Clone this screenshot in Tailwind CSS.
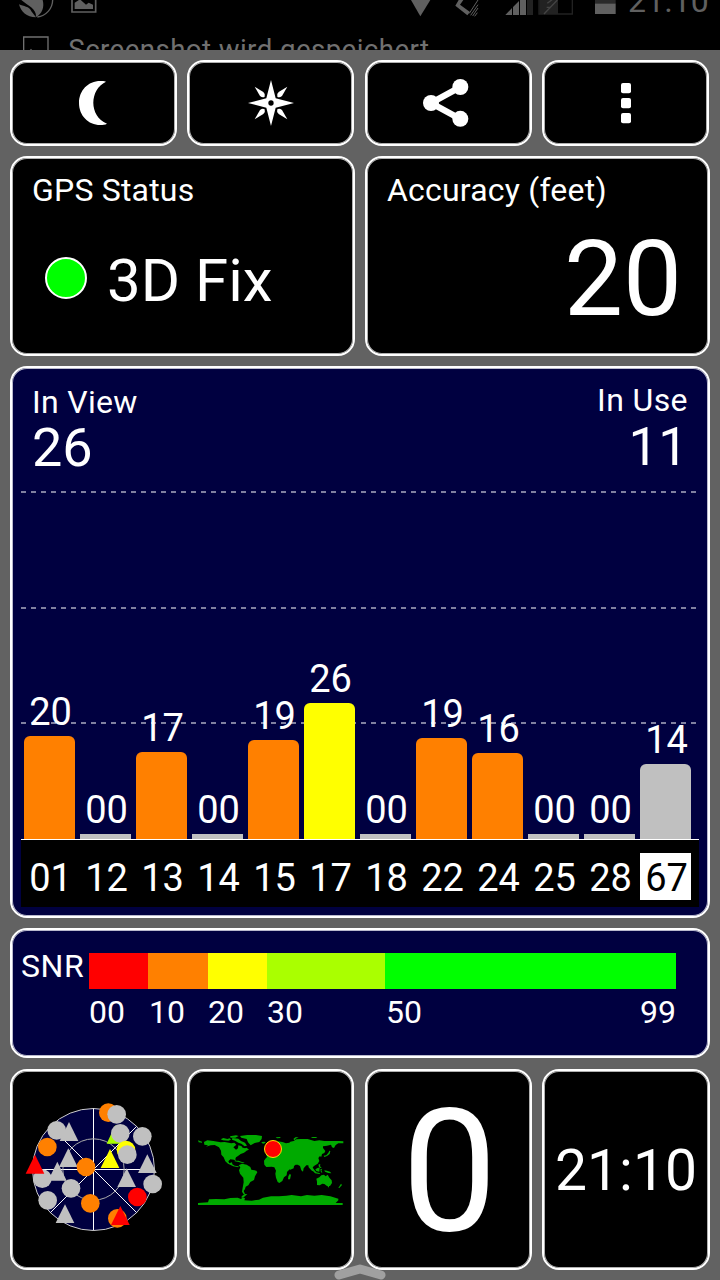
<!DOCTYPE html>
<html lang="de">
<head>
<meta charset="utf-8">
<title>GPS Test</title>
<script src="https://cdn.jsdelivr.net/npm/@tailwindcss/browser@4"></script>
</head>
<body class="bg-[#626262] text-white font-['Roboto',sans-serif]">
<div class="relative w-[720px] h-[1280px] overflow-hidden flex flex-col">
  <!-- status bar with the rolling notification ticker -->
  <header class="h-[50px] shrink-0 bg-black overflow-hidden">
    <svg class="block" width="720" height="50" viewBox="0 0 2160 150" fill="#606060">
      <path d="M57 13 C70 20 88 18 94 34 L108 52 C80 52 62 34 57 13Z M64 0 H128 C134 22 126 42 108 51 C110 26 84 18 64 0Z"/>
      <path d="M158 0 A52 52 0 0 1 112 51" fill="none" stroke="#606060" stroke-width="4"/>
      <path d="M216 -10 V36 H287 V-10" fill="none" stroke="#606060" stroke-width="5"/>
      <path d="M224 27 V8 L240 -2 L258 14 L266 8 L279 14 V27Z"/>
      <path d="M71 160 V111 H144 V160" fill="none" stroke="#707070" stroke-width="4"/>
      <path d="M86 154 L93 146 L100 154Z"/>
      <text x="205" y="177" font-size="83" fill="#707070" textLength="1082">Screenshot wird gespeichert</text>
      <path d="M1233 0 H1291 L1261 49Z"/>
      <path d="M1376 0 L1366 17 L1402 46 L1410 36 L1380 14 L1390 0Z"/>
      <path d="M1408 40 L1434 0 M1412 46 L1434 14 M1418 48 L1434 24 M1424 49 L1432 38" stroke="#606060" stroke-width="3" fill="none"/>
      <path d="M1516 45 L1536 24 V45Z M1539 45 V21 L1557 3 V45Z M1560 45 V0 H1578 V45Z"/>
      <path d="M1581 0 H1599 V45 H1581Z" fill="#222"/>
      <path d="M1617 -4 V42 H1717 V-4" fill="none" stroke="#222" stroke-width="4"/>
      <path d="M1618 0 H1674 V42 H1618Z" fill="#222"/>
      <path d="M1632 42 L1672 0 M1640 22 H1650 M1642 10 L1660 -4" fill="none" stroke="#444" stroke-width="4"/>
      <path d="M1785 0 H1847 V12 H1785Z" fill="#2a2a2a"/>
      <path d="M1785 11 H1847 V42 H1785Z"/>
      <text x="1884" y="37" font-size="96" textLength="242">21:10</text>
    </svg>
  </header>

  <main class="flex flex-col gap-[10px] pl-[10px] pt-[10px]">
    <!-- toolbar -->
    <div class="grid grid-cols-[177px_178px_177px_167px] h-[86px]">
      <button class="w-[167px] h-full bg-black rounded-[17px] border-2 border-white inset-ring inset-ring-[#b0b0b0] flex items-center justify-center">
        <svg width="163" height="82" viewBox="36 186 489 246" fill="#fff"><path d="M318 245 C312 243 306 243 301 243 C264 243 237 272 237 309 C237 346 264 375 301 375 C309 375 315 374 321 371 C266 348 268 268 318 245Z"/></svg>
      </button>
      <button class="w-[167px] h-full bg-black rounded-[17px] border-2 border-white inset-ring inset-ring-[#b0b0b0] flex items-center justify-center">
        <svg width="163" height="82" viewBox="567 186 489 246" fill="#fff">
          <path d="M813 240 L827 295 L882 309 L827 323 L813 378 L799 323 L744 309 L799 295Z"/>
          <path d="M764 260 L790 276 Q797 282 794 290 Q788 294 780 288Z"/>
          <path d="M862 260 L836 276 Q829 282 832 290 Q838 294 846 288Z"/>
          <path d="M764 358 L790 342 Q797 336 794 328 Q788 324 780 330Z"/>
          <path d="M862 358 L836 342 Q829 336 832 328 Q838 324 846 330Z"/>
          <circle cx="813" cy="309" r="8" fill="#000"/>
        </svg>
      </button>
      <button class="w-[167px] h-full bg-black rounded-[17px] border-2 border-white inset-ring inset-ring-[#b0b0b0] flex items-center justify-center">
        <svg width="163" height="82" viewBox="21 186 489 246" fill="#fff"><circle cx="213" cy="309" r="24"/><circle cx="301" cy="261" r="24"/><circle cx="301" cy="356.500" r="24"/><path d="M301 261 L213 309 L301 357" fill="none" stroke="#fff" stroke-width="19"/></svg>
      </button>
      <button class="w-[167px] h-full bg-black rounded-[17px] border-2 border-white inset-ring inset-ring-[#b0b0b0] flex items-center justify-center">
        <svg width="163" height="82" viewBox="552 186 489 246" fill="#fff"><rect x="783" y="249" width="30" height="31" rx="6"/><rect x="783" y="294" width="30" height="31" rx="6"/><rect x="783" y="339" width="30" height="31" rx="6"/></svg>
      </button>
    </div>

    <!-- fix status and accuracy -->
    <div class="flex gap-[10px] h-[200px]">
      <section class="w-[345px] bg-black rounded-[17px] border-2 border-white inset-ring inset-ring-[#b0b0b0] pl-[20px] pt-[12px]">
        <h2 class="text-[32px] leading-[40px] whitespace-nowrap tracking-[0.2px]">GPS Status</h2>
        <div class="flex items-center pt-[36px] pl-[13px]">
          <span class="size-[42px] rounded-full bg-[#00ff00] border-2 border-white -mt-[7px]"></span>
          <span class="text-[60px] leading-[70px] pl-[20px] whitespace-nowrap">3D Fix</span>
        </div>
      </section>
      <section class="w-[345px] bg-black rounded-[17px] border-2 border-white inset-ring inset-ring-[#b0b0b0] pl-[20px] pt-[12px]">
        <h2 class="text-[32px] leading-[40px] whitespace-nowrap tracking-[0.2px]">Accuracy (feet)</h2>
        <p class="text-[105px] leading-[120px] text-right pr-[26px] pt-[10px]">20</p>
      </section>
    </div>

    <!-- satellite signal chart -->
    <section class="relative w-[700px] h-[552px] bg-[#000040] rounded-[17px] border-2 border-white inset-ring inset-ring-[#b8b8cc] flex flex-col">
      <svg class="absolute left-[9px] top-[123px]" width="678" height="234" shape-rendering="crispEdges"><path d="M0 1H675M0 117H675M0 232H675" stroke="#8080a0" stroke-width="2" stroke-dasharray="5 5"/></svg>
      <div class="flex justify-between h-[103px] shrink-0 px-[20px] pt-[14px]">
        <div>
          <p class="text-[32px] leading-[40px] tracking-[0.3px]">In View</p>
          <p class="text-[54px] leading-[52px]">26</p>
        </div>
        <div class="text-right -mt-[2px]">
          <p class="text-[32px] leading-[40px] tracking-[0.4px]">In Use</p>
          <p class="text-[53px] leading-[55px]">11</p>
        </div>
      </div>
      <div id="bars" class="relative grid grid-cols-12 gap-[5px] items-end ml-[12px] w-[667px] h-[368px] text-[38px] leading-[40px] text-center"></div>
      <div class="ml-[9px] w-[678px] h-[68px] bg-black border-t border-white pt-[13px] pl-[3px]">
        <div id="ids" class="grid grid-cols-12 gap-[5px] w-[667px] text-[38px] leading-[51px] text-center"></div>
      </div>
    </section>

    <!-- SNR colour scale -->
    <section class="w-[700px] h-[130px] bg-[#000040] rounded-[17px] border-2 border-white inset-ring inset-ring-[#b8b8cc] pl-[9px] pt-[23px] text-[32px]">
      <div class="flex h-[36px]">
        <span class="w-[68px] leading-[27px] tracking-[0.6px]">SNR</span>
        <span class="w-[59px] bg-[#ff0000]"></span><span class="w-[60px] bg-[#ff8000]"></span><span class="w-[59px] bg-[#ffff00]"></span><span class="w-[118px] bg-[#aaff00]"></span><span class="w-[291px] bg-[#00ff00]"></span>
      </div>
      <div class="flex pl-[68px] pt-[3px] leading-[40px]">
        <span class="w-[60px]">00</span><span class="w-[59px]">10</span><span class="w-[59px]">20</span><span class="w-[119px]">30</span><span class="w-[120px]">50</span><span class="w-[170px] text-right">99</span>
      </div>
    </section>

    <!-- tiles -->
    <div class="grid grid-cols-[177px_178px_177px_168px] h-[201px] mt-[1px]">
      <section class="w-[167px] bg-black rounded-[17px] border-2 border-white inset-ring inset-ring-[#b0b0b0] pt-[19px]">
        <svg width="163" height="150" viewBox="6 0 489 450">
          <circle cx="250.500" cy="238.500" r="183" fill="#000040" stroke="#ccc" stroke-width="3"/>
          <path d="M250.500 55V421M67 238.500H434M121 109L380 368M121 368L380 109" stroke="#fff" stroke-width="3"/>
          <circle cx="250.500" cy="238.500" r="92" fill="none" stroke="#aaa" stroke-width="3"/>
          <g fill="#c0c0c0">
            <circle cx="295" cy="68" r="28" fill="#ff8000"/><circle cx="320" cy="73" r="28"/>
            <circle cx="140" cy="121" r="28"/><path d="M177 96L205 153H149Z"/>
            <circle cx="112" cy="171" r="28" fill="#ff8000"/>
            <path d="M316 105L344 161H290Z" fill="#aaff00"/><circle cx="331" cy="130" r="28"/><circle cx="397" cy="139" r="28"/>
            <circle cx="348" cy="180" r="28" fill="#ffff00"/><circle cx="352" cy="194" r="28"/>
            <path d="M175 175L203 231H147Z"/><path d="M300 177L328 234H272Z" fill="#ffff00"/>
            <circle cx="228" cy="231" r="28" fill="#ff8000"/><path d="M412 193L440 249H384Z"/>
            <circle cx="97" cy="266" r="28"/><path d="M142 215L170 272H114Z"/><path d="M75 194L103 251H47Z" fill="#f00"/>
            <path d="M350 235L378 291H322Z"/><circle cx="428" cy="282" r="28"/>
            <circle cx="183" cy="295" r="28"/><circle cx="382" cy="321" r="28" fill="#f00"/>
            <circle cx="113" cy="331" r="28"/><circle cx="241" cy="340" r="28" fill="#ff8000"/>
            <path d="M165 343L193 399H137Z"/><circle cx="322" cy="385" r="28" fill="#ff8000"/><path d="M331 348L359 405H303Z" fill="#f00"/>
          </g>
        </svg>
      </section>
      <section class="w-[167px] bg-black rounded-[17px] border-2 border-white inset-ring inset-ring-[#b0b0b0] pt-[49px]">
        <svg width="163" height="100" viewBox="-3 0 489 300">
          <g fill="#00aa00">
            <path d="M24 61L26 67L36 68L36 65Z M42 66L52 61L70 63L92 67L104 66L124 70L133 68L139 74L130 82L138 89L144 85L145 76L154 78L158 83L163 84L170 92L162 98L152 102L144 108L138 112L136 117L138 124L132 119L121 118L115 124L118 130L126 127L127 133L134 137L146 139L145 142L130 139L114 131L106 124L101 112L94 104L93 92L87 82L74 75L62 76L48 80L54 76L43 74Z"/>
            <path d="M92 58l8-4 12 3 7-2 4 4-8 3-16-1z M120 49l18-3 8 2-10 5-14 0z M127 54l18 2 8 7 12 5 6 9-7 2-10-8-9-3-10-6-9-3z M150 48L172 45L198 45L216 48L215 57L208 66L194 69L182 76L174 67L170 57L154 53Z M215 66l9-1 3 3-7 3-5-2z M160 86l10-3 7 6-8 3z M134 122l12 0 10 4 8 2-4 2-14-4-12-2z M164 222l8 0-9 8-8 4 0-5z"/>
            <path d="M146 136l10-5 14 3 11 7 3 8 15 3 3 5-7 12-3 11-11 6-6 10-8 4-2 7-4 6 4 9-4 1-5-8 2-12 3-16-1-14-10-12-3-10 4-9z"/>
            <path d="M228 114l8-6 16 0 9 5 9-2 13 3 5 9 9 12 11-1-9 14-8 8-1 10-8 6-5 11-9 6-5-3-5-13-2-12 2-9-5-10-8-2-16 1-6-7-1-12z M299 162l4 2-3 14-6 0 1-9z"/>
            <path d="M228 105l0-9 11-3-1-5 10-5 4-5 8-6 3-8 14 2 11 4 10-2 3-3 10-2 8-5 14-1 20 0 20 6 15-2 15 2 20 0 25 0 12 1 0 6-15 0-8 5-5 9-6-2-3-8-12 3-12 2 0 5 7 9-3 6-7 3-2 8-5-1-4 5 3 9-5 8-10 6-5 5 4 8-5 4-7-8-4-4-1-6-6 0-8 9-2 10-5-4-4-13-7-4-6 0-5 4-1 7-10 4-5-3-8-13-3-8-6 0-5 0-2-5-6 0 3 5-6 0-8-8-9 0-7 6z"/>
            <path d="M228 83l5-4 1-7 4 3 3 9-8 3z M257 52l14-1 0 3-10 1z M310 57l6-5 10-1-9 5-3 5z M362 51l16 0 4 3-14 0z M401 107l8-1 7-9 2-5 3 1-2 9-8 6-8 3z M386 133l5 0-1 6 5 4-5 1-4-5z M361 139l10 9 8 9 12 3-3 2-13-2-7-8-8-8z M376 148l8-5 5 0-1 12-9-2z M391 148l6-2-3 5 3 7-4-1z M403 151l8 1 9 3 4 5-9-1-10-4z"/>
            <path d="M379 176l9-4 6-6 8-2 5 5 6-5 5 9 7 8 1 8-6 9-9 0-8-6-6-1-8 5-8-1 0-10z M413 198l4 0 0 4-3 0z M453 191l3 4-8 9-3 0z"/>
            <path d="M24 249l30-2 3-9 22-1 24 1 18-4 22-1 10 4 6-5 6 3-2 6 22 1 22-3 12-6 24-4 24 0 22-2 16-2 28 4 18-4 22 2 22-2 26 4 24 7 0 5-8 8 21 0V255H24z"/>
          </g>
          <circle cx="249" cy="87" r="25.500" fill="#f00" stroke="#ffe000" stroke-width="3"/>
        </svg>
      </section>
      <section class="w-[167px] bg-black rounded-[17px] border-2 border-white inset-ring inset-ring-[#b0b0b0] flex items-center justify-center text-[170px] leading-none pt-[4px] pl-[2px]">0</section>
      <section class="w-[168px] bg-black rounded-[17px] border-2 border-white inset-ring inset-ring-[#b0b0b0] flex items-center justify-center text-[57px] leading-none pt-px">21:10</section>
    </div>
  </main>

  <!-- drawer handle -->
  <svg class="absolute left-[330px] top-[1260px]" width="60" height="20"><path d="M9 15L30 9L51 15" fill="none" stroke="#a0a0a0" stroke-width="9" stroke-linecap="round" stroke-linejoin="round"/></svg>
</div>
<script>
const sats = [['01','20',103,'o'],['12','00',5,'g'],['13','17',87,'o'],['14','00',5,'g'],['15','19',99,'o'],['17','26',136,'y'],['18','00',5,'g'],['22','19',101,'o'],['24','16',86,'o'],['25','00',5,'g'],['28','00',5,'g'],['67','14',75,'g']];
const fill = {o:'bg-[#ff8000]', g:'bg-[#c0c0c0]', y:'bg-[#ffff00]'};
document.getElementById('bars').innerHTML = sats.map(([, snr, h, c]) =>
  `<div><div class="mb-[4px] pl-[2px]">${snr}</div><div class="${fill[c]} ${h > 5 ? 'rounded-t-[6px]' : ''}" style="height:${h}px"></div></div>`).join('');
document.getElementById('ids').innerHTML = sats.map(([id]) =>
  `<div class="pl-[2px] ${id === '67' ? 'bg-white text-black h-[47px]' : 'h-[47px]'}">${id}</div>`).join('');
</script>
</body>
</html>
